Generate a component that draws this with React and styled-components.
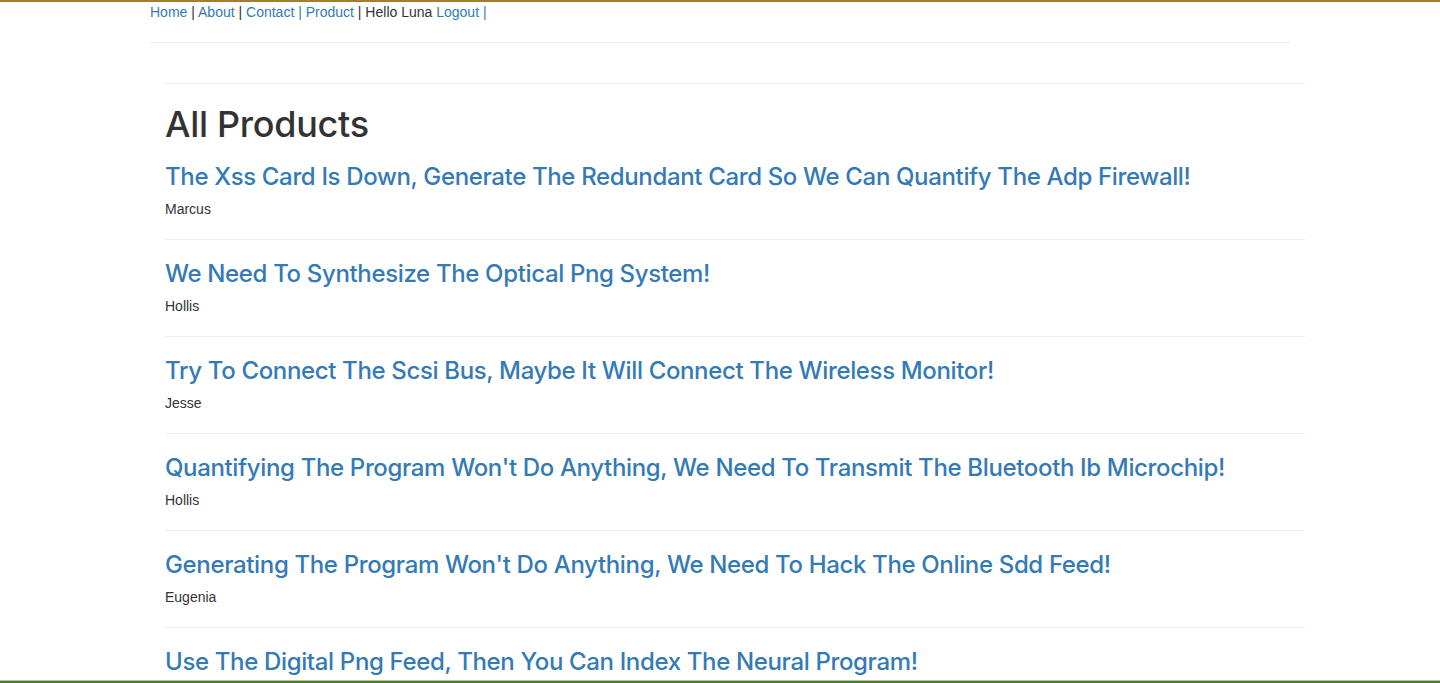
import React from 'react'
import styled, { createGlobalStyle } from 'styled-components'

const GlobalStyle = createGlobalStyle`
  html, body {
    margin: 0;
    padding: 0;
    background: #fff;
  }
  body {
    border-top: 2px solid #a97b30;
    font-family: 'Liberation Sans', Arial, Helvetica, sans-serif;
    font-size: 14px;
    line-height: 20px;
    color: #333;
  }
`

const Container = styled.div`
  width: 1140px;
  padding: 0 15px;
  margin: 0 auto;
`

const Inner = styled.div`
  width: 1140px;
  padding: 0 15px;
  display: flow-root;
`

const Nav = styled.nav`
  height: 20px;
  white-space: pre;
`

const NavLink = styled.a`
  color: #337ab7;
  text-decoration: none;
`

const Rule = styled.hr`
  margin: 20px 0;
  border: 0;
  border-top: 1px solid #eee;
`

const Title = styled.h1`
  font-family: Inter, 'Liberation Sans', sans-serif;
  font-size: 36px;
  line-height: 38px;
  font-weight: 500;
  letter-spacing: -0.3px;
  margin: 20px 0 10px;
  padding-top: 1px;
  color: #333;
`

const ItemTitle = styled.h3`
  font-family: Inter, 'Liberation Sans', sans-serif;
  font-size: 24px;
  line-height: 26px;
  font-weight: 500;
  letter-spacing: -0.35px;
  margin: 20px 0 9px;
  padding-top: 1px;
  white-space: nowrap;
  a {
    color: #337ab7;
    text-decoration: none;
  }
`

const Author = styled.p`
  margin: 0 0 10px;
`

const WindowEdge = styled.div`
  position: fixed;
  left: 0;
  right: 0;
  bottom: 0;
  height: 2px;
  border-top: 1px solid #c9b9a0;
  background: #4c7d2b;
`

const products = [
  { title: 'The Xss Card Is Down, Generate The Redundant Card So We Can Quantify The Adp Firewall!', author: 'Marcus' },
  { title: 'We Need To Synthesize The Optical Png System!', author: 'Hollis' },
  { title: 'Try To Connect The Scsi Bus, Maybe It Will Connect The Wireless Monitor!', author: 'Jesse' },
  { title: "Quantifying The Program Won't Do Anything, We Need To Transmit The Bluetooth Ib Microchip!", author: 'Hollis' },
  { title: "Generating The Program Won't Do Anything, We Need To Hack The Online Sdd Feed!", author: 'Eugenia' },
  { title: 'Use The Digital Png Feed, Then You Can Index The Neural Program!', author: 'Marcus' },
  { title: 'Try To Back Up The Rss Capacitor, Maybe It Will Back Up The Virtual Card!', author: 'Jesse' },
]

const App = () => (
  <>
    <GlobalStyle />
    <Container>
      <Nav>
        <NavLink href="#">Home</NavLink> | <NavLink href="#">About</NavLink> |{' '}
        <NavLink href="#">Contact |</NavLink> <NavLink href="#">Product</NavLink> | Hello Luna{' '}
        <NavLink href="#">Logout |</NavLink>
      </Nav>
      <Rule />
      <Inner>
        <Rule />
        <Title>All Products</Title>
        {products.map((p, i) => (
          <div key={i}>
            {i > 0 && <Rule />}
            <ItemTitle>
              <a href="#">{p.title}</a>
            </ItemTitle>
            <Author>{p.author}</Author>
          </div>
        ))}
      </Inner>
    </Container>
    <WindowEdge />
  </>
)

export default App
